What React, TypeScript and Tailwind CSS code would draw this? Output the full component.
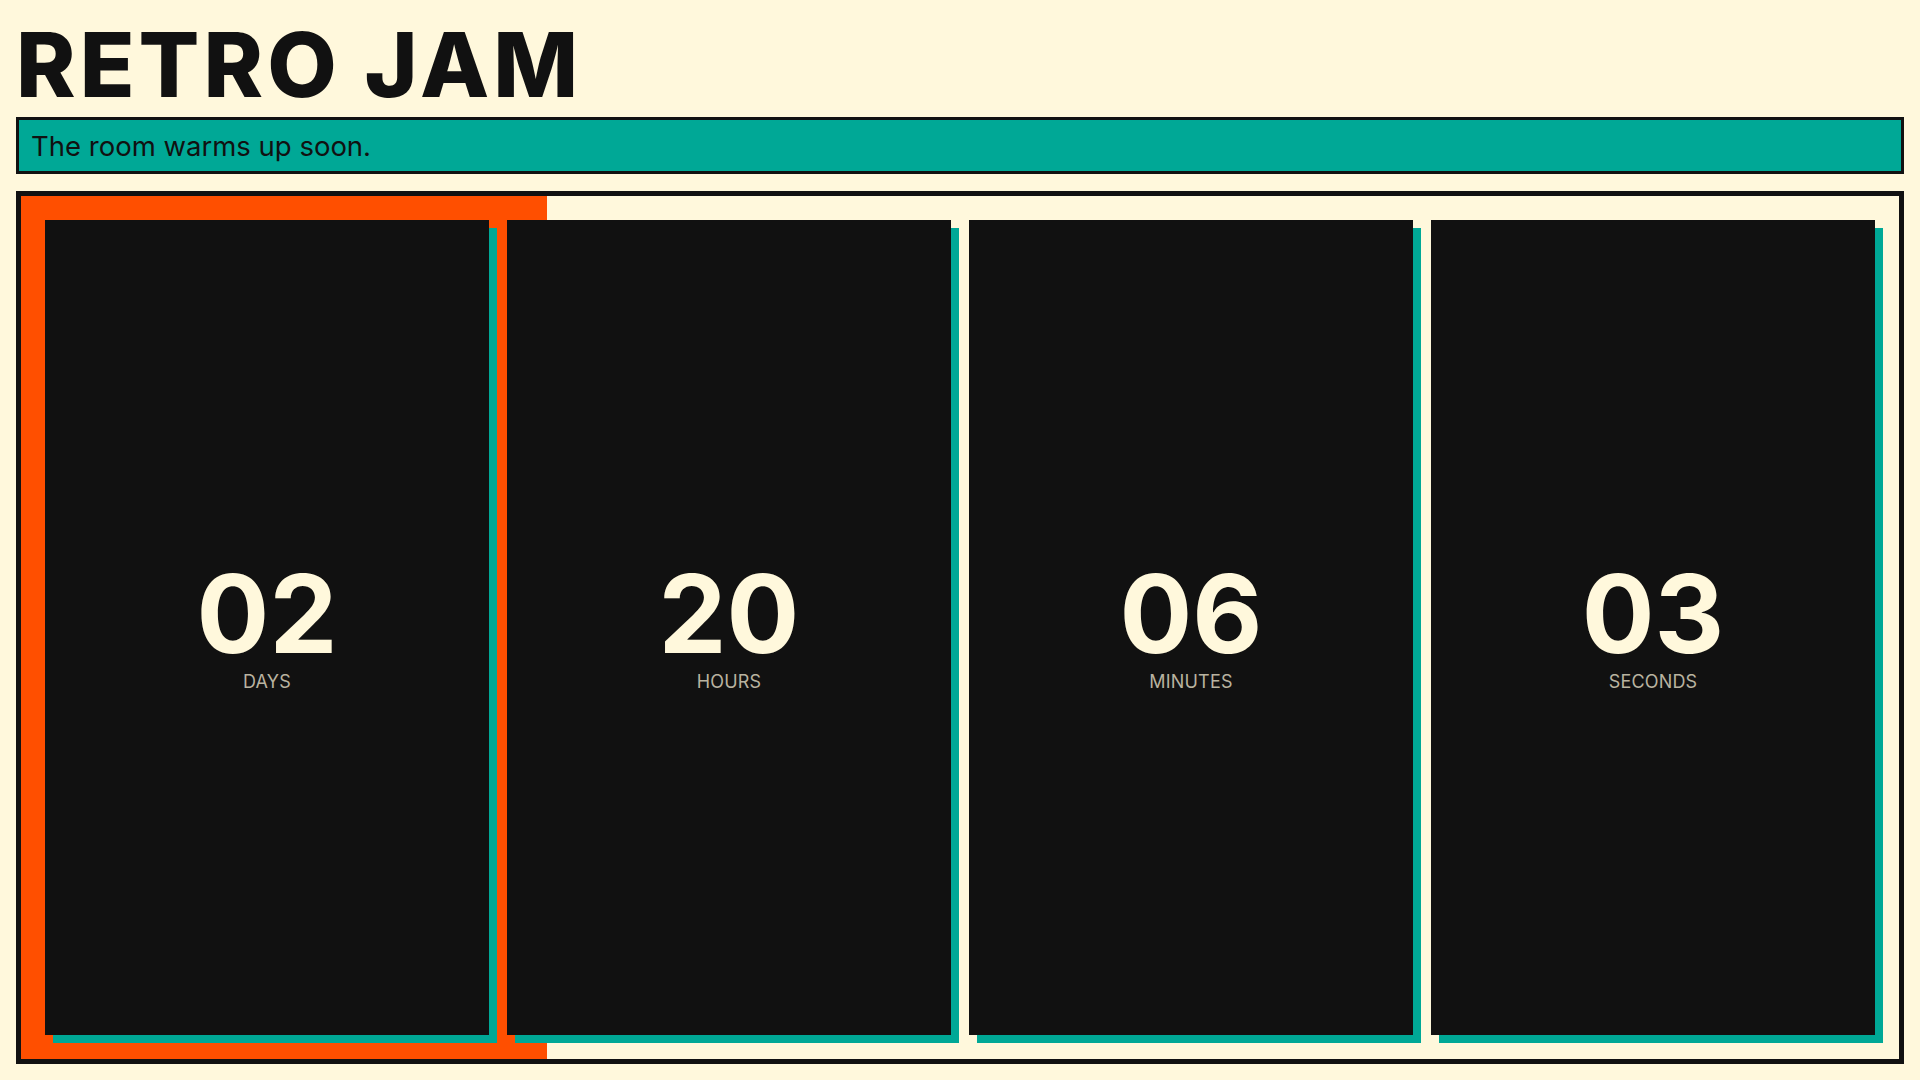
const UNITS = [
  { value: "02", label: "DAYS" },
  { value: "20", label: "HOURS" },
  { value: "06", label: "MINUTES" },
  { value: "03", label: "SECONDS" },
];

function UnitCard({ value, label }: { value: string; label: string }) {
  return (
    <div className="flex flex-col items-center justify-center bg-[#111111] pt-2 shadow-[8px_8px_0_#00a896]">
      <span className="text-[108px] leading-[92px] font-bold text-[#fff8dc]">{value}</span>
      <span className="mt-2 text-[18px] leading-[27px] tracking-[0.01em] text-[#b9b3a0]">{label}</span>
    </div>
  );
}

export default function App() {
  return (
    <div className="min-h-screen bg-[#fff8dc] text-[#111111] flex flex-col p-4 font-[Inter,sans-serif]">
      <h1 className="mt-1 text-[90px] leading-none font-extrabold tracking-[0.045em]">RETRO JAM</h1>
      <div className="mt-[7px] border-[3px] border-[#111111] bg-[#00a896] px-3 pt-[5px] pb-[3px] text-[27.5px] leading-[43px]">
        The room warms up soon.
      </div>
      <div className="relative mt-[17px] flex flex-1 border-[5px] border-[#111111] p-6">
        {/* progress fill behind the cards */}
        <div className="absolute inset-y-0 left-0 w-[28%] bg-[#ff4f00]" />
        <div className="relative grid flex-1 grid-cols-4 gap-[18px]">
          {UNITS.map((u) => (
            <UnitCard key={u.label} value={u.value} label={u.label} />
          ))}
        </div>
      </div>
    </div>
  );
}
